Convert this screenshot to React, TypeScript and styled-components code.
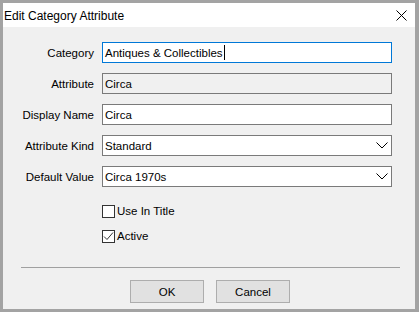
import styled, { createGlobalStyle } from "styled-components";

const GlobalStyle = createGlobalStyle`
  html, body {
    margin: 0;
    padding: 0;
    background: #ffffff;
  }
  * {
    box-sizing: border-box;
  }
`;

const Window = styled.div`
  width: 419px;
  height: 312px;
  border-style: solid;
  border-color: #a3a3a3;
  border-width: 3px 4px 3px 3px;
  display: flex;
  flex-direction: column;
  font-family: "Liberation Sans", Arial, sans-serif;
  font-size: 11.5px;
  color: #000;
`;

const TitleBar = styled.div`
  height: 24px;
  background: #ffffff;
  display: flex;
  align-items: center;
  justify-content: space-between;
  padding: 0 3px 0 1px;
`;

const Title = styled.span`
  font-size: 12px;
  margin-top: 1px;
`;

const CloseButton = styled.div`
  width: 22px;
  height: 22px;
  display: flex;
  align-items: center;
  justify-content: center;
`;

const Body = styled.div`
  flex: 1;
  background: #f0f0f0;
  display: flex;
  flex-direction: column;
  padding-top: 15px;
`;

const Form = styled.div`
  display: grid;
  grid-template-columns: 91px 290px;
  column-gap: 8px;
  row-gap: 10px;
  align-items: center;
`;

const Label = styled.label`
  text-align: right;
`;

const Field = styled.div<{ $focused?: boolean; $readOnly?: boolean }>`
  height: 21px;
  border: 1px solid ${(p) => (p.$focused ? "#0078d7" : "#7a7a7a")};
  background: ${(p) => (p.$readOnly ? "#f0f0f0" : "#ffffff")};
  display: flex;
  align-items: center;
  padding: 0 3px 0 2px;
  white-space: nowrap;
`;

const Value = styled.span`
  flex: 1;
  display: flex;
  align-items: center;
`;

const Caret = styled.span`
  display: inline-block;
  width: 1px;
  height: 15px;
  background: #000;
  margin-left: 1px;
`;

const Checks = styled.div`
  grid-column: 2;
  display: flex;
  flex-direction: column;
  gap: 12px;
  margin-top: 8px;
`;

const CheckRow = styled.div`
  height: 13px;
  line-height: 13px;
  display: flex;
  align-items: center;
  gap: 2px;
`;

const Box = styled.span`
  width: 13px;
  height: 13px;
  border: 1px solid #333333;
  background: #ffffff;
  display: flex;
  align-items: center;
  justify-content: center;
`;

const Separator = styled.div`
  height: 1px;
  background: #a0a0a0;
  margin: 24px 15px 0 18px;
`;

const Buttons = styled.div`
  display: flex;
  justify-content: center;
  gap: 12px;
  margin-top: 12px;
  padding-left: 2px;
`;

const Button = styled.div`
  width: 74px;
  height: 23px;
  background: #e1e1e1;
  border: 1px solid #adadad;
  display: flex;
  align-items: center;
  justify-content: center;
`;

const Chevron = () => (
  <svg width="12" height="7" viewBox="0 0 12 7">
    <polyline points="0.5,0.5 6,6 11.5,0.5" fill="none" stroke="#000" strokeWidth="1" />
  </svg>
);

const Check = () => (
  <svg width="11" height="11" viewBox="0 0 11 11">
    <polyline points="1,5.5 4,8.5 10,1.5" fill="none" stroke="#333" strokeWidth="1" />
  </svg>
);

function CheckBox({ checked, label }: { checked?: boolean; label: string }) {
  return (
    <CheckRow>
      <Box>{checked && <Check />}</Box>
      <span>{label}</span>
    </CheckRow>
  );
}

export default function App() {
  return (
    <>
      <GlobalStyle />
      <Window>
        <TitleBar>
          <Title>Edit Category Attribute</Title>
          <CloseButton>
            <svg width="11" height="11" viewBox="0 0 11 11">
              <path d="M0.5 0.5 L10.5 10.5 M10.5 0.5 L0.5 10.5" stroke="#000" strokeWidth="1" />
            </svg>
          </CloseButton>
        </TitleBar>
        <Body>
          <Form>
            <Label>Category</Label>
            <Field $focused>
              <Value>
                Antiques &amp; Collectibles
                <Caret />
              </Value>
            </Field>

            <Label>Attribute</Label>
            <Field $readOnly>
              <Value>Circa</Value>
            </Field>

            <Label>Display Name</Label>
            <Field>
              <Value>Circa</Value>
            </Field>

            <Label>Attribute Kind</Label>
            <Field>
              <Value>Standard</Value>
              <Chevron />
            </Field>

            <Label>Default Value</Label>
            <Field>
              <Value>Circa 1970s</Value>
              <Chevron />
            </Field>

            <Checks>
              <CheckBox label="Use In Title" />
              <CheckBox checked label="Active" />
            </Checks>
          </Form>
          <Separator />
          <Buttons>
            <Button>OK</Button>
            <Button>Cancel</Button>
          </Buttons>
        </Body>
      </Window>
    </>
  );
}
